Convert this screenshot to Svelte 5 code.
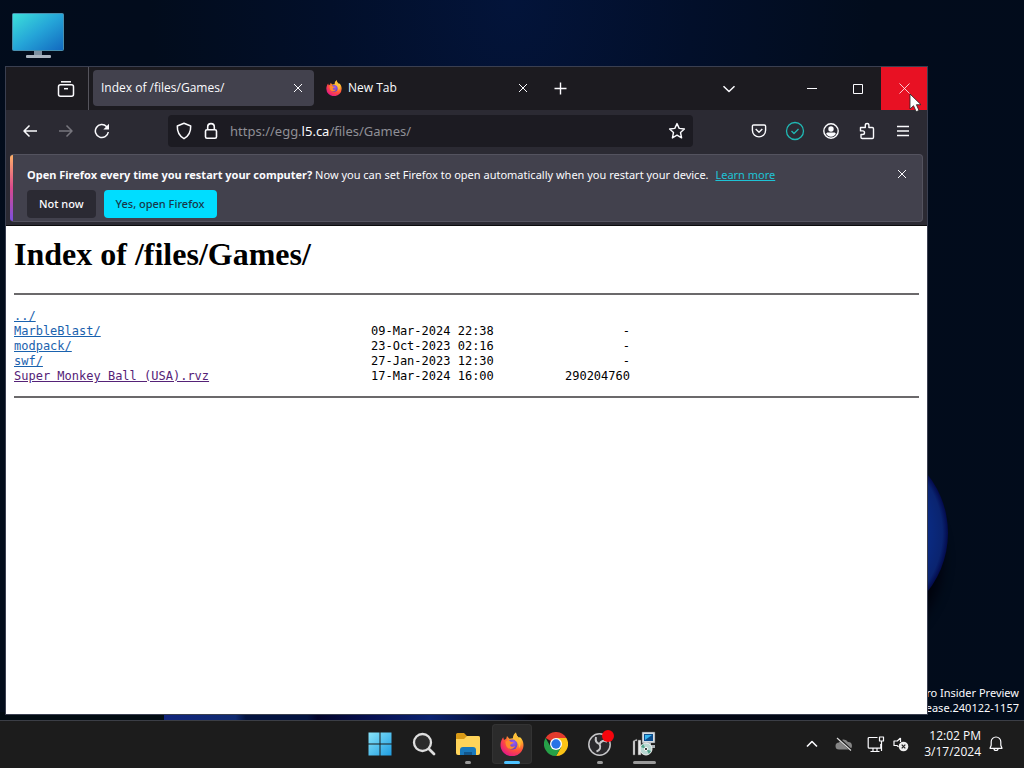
<script>
	let url = $state('/files/Games/');

	const files = [
		{ name: '../', date: '', size: '' },
		{ name: 'MarbleBlast/', date: '09-Mar-2024 22:38', size: '-' },
		{ name: 'modpack/', date: '23-Oct-2023 02:16', size: '-' },
		{ name: 'swf/', date: '27-Jan-2023 12:30', size: '-' },
		{ name: 'Super Monkey Ball (USA).rvz', date: '17-Mar-2024 16:00', size: '290204760', visited: true }
	];
</script>

{#snippet firefox(size, id)}
	<svg width={size} height={size} viewBox="0 0 24 24">
		<defs>
			<radialGradient id="{id}-body" cx="0.75" cy="0.15" r="0.95">
				<stop offset="0" stop-color="#fff04a" />
				<stop offset="0.35" stop-color="#ffa52a" />
				<stop offset="0.65" stop-color="#ff4f3c" />
				<stop offset="1" stop-color="#e3158a" />
			</radialGradient>
			<radialGradient id="{id}-core" cx="0.6" cy="0.3" r="0.8">
				<stop offset="0" stop-color="#a05cf0" />
				<stop offset="1" stop-color="#4a3cc4" />
			</radialGradient>
		</defs>
		<path
			fill="url(#{id}-body)"
			d="M3.2 5.2 4 8l2.2-1.2L7 4l2.4 2.8C11 6.400 12 6.200 13 6.300 12.800 4 14 1.500 16 .4c.2 2.600 1.200 3.600 2.600 5l1.500-.2c2.200 2 3.400 4.600 3.400 7.800A11.500 11.200 0 0 1 .5 13C.5 9.800 1.800 7.200 3.200 5.200Z"
		/>
		<circle cx="12.400" cy="12.600" r="5" fill="url(#{id}-core)" />
		<path fill="#ff8a2b" d="M5.500 9.500c2-1.200 4.200-.8 5.700.6l2.300.2c-.2 1.500-2.800 1.400-3.300 2.900.4 1.600 3 2.200 5 .8-1.500 3.800-7 4-8.800.2-.7-1.500-1-3-.9-4.700Z" />
		<path fill="#ffbd38" d="M16 .4c.2 3.600 3.500 5 4.300 9 .5 2.700 0 5-1.300 6.800.2-4-1.300-6.800-4.200-8.200-1.300-2.500-.8-6 1.200-7.600Z" />
	</svg>
{/snippet}

{#snippet cross(size)}
	<svg class="line" width={size} height={size} viewBox="0 0 10 10"><path d="m1 1 8 8M9 1 1 9" /></svg>
{/snippet}

<div class="screen">
	<main class="desktop">
		<div class="bloom"></div>
		<div class="petals"></div>

		<button class="shortcut" aria-label="This PC">
			<svg width="52" height="46" viewBox="0 0 52 46">
				<defs>
					<linearGradient id="pc" x1="0" y1="0" x2="1" y2="1">
						<stop offset="0" stop-color="#3de0da" />
						<stop offset="0.5" stop-color="#25a5d8" />
						<stop offset="1" stop-color="#1268bf" />
					</linearGradient>
				</defs>
				<path fill="#7d8fa0" d="M22 37h8v6h-8z" />
				<rect x="14" y="42" width="25" height="3" rx="1" fill="#aab4c0" />
				<rect x="0.500" y="0.500" width="51" height="37" rx="1" fill="url(#pc)" stroke="#4a8fae" />
			</svg>
		</button>

		<div class="watermark">ro Insider Preview<br />ease.240122-1157</div>

		<section class="window">
			<header class="tabs">
				<div class="view">
					<button aria-label="Firefox View">
						<svg class="line" width="18" height="18" viewBox="0 0 18 18" stroke-width="1.500">
							<path d="M4 1.800h10" />
							<rect x="1.500" y="4.800" width="15" height="11.500" rx="2" />
							<path d="M7 8.700h4" />
						</svg>
					</button>
				</div>
				<div class="tab active">
					<span>Index of /files/Games/</span>
					<button aria-label="Close tab">{@render cross(10)}</button>
				</div>
				<div class="tab">
					{@render firefox(16, 'ff-tab')}
					<span>New Tab</span>
					<button aria-label="Close tab">{@render cross(10)}</button>
				</div>
				<button class="add" aria-label="New tab">
					<svg class="line" width="13" height="13" viewBox="0 0 13 13" stroke-width="1.400"><path d="M6.500.5v12M.5 6.500h12" /></svg>
				</button>
				<button class="all" aria-label="List all tabs">
					<svg class="line" width="14" height="8" viewBox="0 0 14 8" stroke-width="1.500"><path d="m1.500 1.200 5.500 5.300 5.500-5.300" /></svg>
				</button>
				<div class="controls">
					<button aria-label="Minimize">
						<svg class="line" width="10" height="10" viewBox="0 0 10 10"><path d="M0 4.500h10" /></svg>
					</button>
					<button aria-label="Maximize">
						<svg class="line" width="10" height="10" viewBox="0 0 10 10"><path d="M.5.5h9v9h-9z" /></svg>
					</button>
					<button class="close" aria-label="Close">
						<svg class="line" width="11" height="11" viewBox="0 0 11 11" stroke-width="0.800"><path d="m.5.5 10 10M10.500.5l-10 10" /></svg>
						<svg class="cursor" width="13" height="20" viewBox="0 0 13 20">
							<path fill="#fff" stroke="#222" stroke-width="0.800" d="M1 1v15l3.500-3.300 2.700 6 2.800-1.200-2.600-5.800H12Z" />
						</svg>
					</button>
				</div>
			</header>

			<nav class="toolbar">
				<button aria-label="Back">
					<svg class="line" width="16" height="16" viewBox="0 0 16 16" stroke-width="1.500"><path d="M15 8H2M7.500 2.500 2 8l5.500 5.500" /></svg>
				</button>
				<button class="dim" aria-label="Forward">
					<svg class="line" width="16" height="16" viewBox="0 0 16 16" stroke-width="1.500"><path d="M1 8h13M8.500 2.500 14 8l-5.500 5.500" /></svg>
				</button>
				<button aria-label="Reload">
					<svg class="line" width="16" height="16" viewBox="0 0 16 16" stroke-width="1.500">
						<path d="M14.300 9A6.500 6.500 0 1 1 12.500 3.500l1.200 1.200" />
						<path fill="currentColor" stroke="none" d="M15 .8V6.500H9.300Z" />
					</svg>
				</button>

				<div class="urlbar">
					<svg class="line" width="16" height="18" viewBox="0 0 16 18" stroke-width="1.500"><path d="M8 1.200 14.700 4c.2 5.500-1.700 9.800-6.700 12.700C3 13.800 1.100 9.500 1.300 4Z" /></svg>
					<svg class="line" width="14" height="18" viewBox="0 0 14 18" stroke-width="1.600">
						<rect x="1.500" y="7.800" width="11" height="8.400" rx="1.500" />
						<path d="M3.700 7.800V4.900a3.300 3.300 0 0 1 6.600 0v2.900" />
					</svg>
					<label class="address">
						<span>https://egg.<b>l5.ca</b></span><input aria-label="Address" bind:value={url} />
					</label>
					<button aria-label="Bookmark this page">
						<svg class="line" width="18" height="18" viewBox="0 0 18 18" stroke-width="1.400"><path d="m9 1.600 2.200 4.800 5.200.6-3.900 3.500 1.100 5.400L9 13.200l-4.600 2.700 1.100-5.400L1.600 7l5.200-.6Z" /></svg>
					</button>
				</div>

				<button aria-label="Save to Pocket">
					<svg class="line" width="16" height="16" viewBox="0 0 16 16" stroke-width="1.400">
						<path d="M2.700 2h10.600c.8 0 1.300.5 1.300 1.300v4a6.600 6.600 0 0 1-13.200 0v-4C1.400 2.500 1.900 2 2.700 2Z" />
						<path d="m4.700 6 3.300 3.200L11.300 6" />
					</svg>
				</button>
				<button class="teal" aria-label="Extension">
					<svg class="line" width="20" height="20" viewBox="0 0 20 20" stroke-width="1.300">
						<circle cx="10" cy="10" r="8.500" />
						<path d="m6.500 10 2.500 2.500 4.500-4.500" />
					</svg>
				</button>
				<button aria-label="Account">
					<svg class="line" width="16" height="16" viewBox="0 0 16 16" stroke-width="1.400">
						<circle cx="8" cy="8" r="7.200" />
						<circle cx="8" cy="6" r="2.700" fill="currentColor" stroke="none" />
						<path fill="currentColor" stroke="none" d="M3.200 11c0-1 .8-1.500 1.700-1.500h6.200c.9 0 1.700.5 1.700 1.500a5.700 5.700 0 0 1-9.600 0Z" />
					</svg>
				</button>
				<button aria-label="Extensions">
					<svg class="line" width="16" height="18" viewBox="0 0 16 18" stroke-width="1.400"><path d="M1.500 5.500h4.800V3.300a1.800 1.800 0 0 1 3.600 0v2.200h3.400c.7 0 1.200.5 1.200 1.200v8.600c0 .7-.5 1.200-1.200 1.200H3.200c-.7 0-1.200-.5-1.200-1.200v-2.800h1.700a1.800 1.800 0 0 0 0-3.600H1.500Z" /></svg>
				</button>
				<button aria-label="Menu">
					<svg class="line" width="14" height="12" viewBox="0 0 14 12" stroke-width="1.300"><path d="M1 1.500h12M1 6h12M1 10.500h12" /></svg>
				</button>
			</nav>

			<div class="notice-wrap">
				<aside class="notice">
					<div class="message">
						<p><strong>Open Firefox every time you restart your computer?</strong> Now you can set Firefox to open automatically when you restart your device. <a href="#learn">Learn more</a></p>
						<button class="dismiss" aria-label="Dismiss">{@render cross(10)}</button>
					</div>
					<div class="answers">
						<button>Not now</button>
						<button class="primary">Yes, open Firefox</button>
					</div>
				</aside>
			</div>

			<article class="page">
				<h1>Index of /files/Games/</h1>
				<hr />
				<table>
					<tbody>
						{#each files as file}
							<tr>
								<td class="name"><a href="#file" class:visited={file.visited}>{file.name}</a></td>
								<td class="date">{file.date}</td>
								<td class="size">{file.size}</td>
							</tr>
						{/each}
					</tbody>
				</table>
				<hr />
			</article>
		</section>
	</main>

	<footer class="taskbar">
		<div class="apps">
			<button aria-label="Start">
				<svg width="24" height="24" viewBox="0 0 24 24">
					<defs>
						<linearGradient id="win" x1="0" y1="0" x2="24" y2="24" gradientUnits="userSpaceOnUse">
							<stop offset="0" stop-color="#8be6fb" />
							<stop offset="1" stop-color="#1c9be0" />
						</linearGradient>
					</defs>
					<path fill="url(#win)" d="M.5.500h11v11H.5zM12.500.500h11v11h-11zM.5 12.500h11v11H.5zM12.500 12.500h11v11h-11z" />
				</svg>
			</button>
			<button aria-label="Search">
				<svg width="24" height="24" viewBox="0 0 24 24" fill="#2c2c2c" stroke="#dedede" stroke-width="2.300" stroke-linecap="round">
					<circle cx="10.500" cy="10.500" r="8.500" />
					<path d="m17 17 5 5" stroke-width="2.800" />
				</svg>
			</button>
			<button class="running" aria-label="File Explorer">
				<svg width="26" height="24" viewBox="0 0 26 24">
					<path fill="#d99a16" d="M1 2.500Q1 1 2.500 1H9l3 3h11q2 0 2 2v4H1Z" />
					<path fill="#ffd45a" d="M1 7h8l3-3h11q2 0 2 2v15q0 2-2 2H3q-2 0-2-2Z" />
					<path fill="#1979bd" d="M5 23v-5q0-3 3-3h10q3 0 3 3v5Z" />
					<path fill="#12568c" d="M9 23v-3h8v3Z" />
				</svg>
			</button>
			<button class="running current" aria-label="Firefox">{@render firefox(24, 'ff-bar')}</button>
			<button aria-label="Chrome">
				<svg width="24" height="24" viewBox="0 0 24 24">
					<path fill="#e33b2e" d="M12 12 1.600 6A12 12 0 0 1 22.400 6Z" />
					<path fill="#fbc316" d="M12 6h10.400A12 12 0 0 1 12 24l5.200-9Z" />
					<path fill="#26a148" d="M1.600 6 6.800 15 12 18l5.200-3L12 24A12 12 0 0 1 1.600 6Z" />
					<circle cx="12" cy="12" r="6" fill="#fff" />
					<circle cx="12" cy="12" r="4.700" fill="#2873e6" />
				</svg>
			</button>
			<button class="running" aria-label="OBS Studio">
				<svg width="28" height="28" viewBox="0 0 28 28">
					<circle cx="13.500" cy="14.500" r="10.700" fill="#2a292c" stroke="#c6c6c8" stroke-width="1.500" />
					<g fill="none" stroke="#c6c6c8" stroke-width="2">
						<path d="M10 7c-1 4 .5 6.200 3.500 7" />
						<path d="M21 12c-3-2.500-6-1-7.500 2" />
						<path d="M10.500 21.500c3.500-1.200 4.700-4 3-7.500" />
					</g>
					<circle cx="22" cy="6" r="6" fill="#f5050d" />
				</svg>
			</button>
			<button class="running wide" aria-label="Installer">
				<svg width="24" height="26" viewBox="0 0 24 26">
					<path fill="#d5dce2" stroke="#555" stroke-width="0.500" d="M10 1h13v11H10z" />
					<path fill="#0c4c8c" d="M12 3h9v7h-9z" />
					<path fill="#35b3ee" d="M13 4h7l-7 5z" />
					<path fill="#aeb4b8" d="M14 12h5v2h-5zM10 14h13v3H10z" />
					<path fill="#e8e8e8" stroke="#555" stroke-width="0.500" d="m1 10 4-2v2H3v14H1zM6 9h3v15H6z" />
					<circle cx="14" cy="18" r="6" fill="#b9d7d2" stroke="#f2f2f2" />
					<path fill="#52a28a" d="m14 18-5-2 2-3zM14 18l5 2-2 3z" />
					<circle cx="14" cy="18" r="1.600" fill="#222" stroke="#fff" />
				</svg>
			</button>
		</div>

		<div class="tray">
			<button aria-label="Hidden icons">
				<svg class="line" width="12" height="8" viewBox="0 0 12 8" stroke-width="1.600"><path d="m1 6.500 5-5 5 5" /></svg>
			</button>
			<button aria-label="OneDrive">
				<svg width="18" height="14" viewBox="0 0 18 14">
					<path fill="#858585" d="M4 12.500a3.500 3.500 0 0 1 0-7 5 5 0 0 1 9-.5 3.800 3.800 0 0 1 1 7.500Z" />
					<path stroke="#1c1c1c" stroke-width="2.600" d="m3 1 13 12" />
					<path stroke="#dcdcdc" stroke-width="1.200" d="m2 1 14 12.500" />
				</svg>
			</button>
			<button class="status" aria-label="Network and volume">
				<svg class="line" width="18" height="17" viewBox="0 0 18 17" stroke-width="1.200">
					<path d="M10.500 1.500H2.200q-1 0-1 1v8.700q0 1 1 1h11.600V8M6 12.200v3M10 12.200v3M3.500 15.500h9" />
					<path d="M12.500 1h4v4h-4zM14.500 5v10" />
				</svg>
				<svg class="line" width="16" height="16" viewBox="0 0 16 16" stroke-width="1.200">
					<path d="M7.500 2 4.300 5H1v4.500h3l1.500 1.400M7.500 2v4" />
					<circle cx="10.500" cy="10.500" r="4.800" fill="#eee" stroke="none" />
					<path stroke="#222" d="m8.700 8.700 3.600 3.600M12.300 8.700l-3.600 3.600" />
				</svg>
			</button>
			<button class="clock">12:02 PM<br />3/17/2024</button>
			<button aria-label="Notifications">
				<svg class="line" width="14" height="16" viewBox="0 0 14 16" stroke-width="1.200">
					<path d="M7 1a4.800 4.800 0 0 0-4.800 4.800v3.400L1 12.300h12l-1.200-3.100V5.800A4.800 4.800 0 0 0 7 1ZM5 12.500a2 2 0 0 0 4 0" />
				</svg>
			</button>
		</div>
	</footer>
</div>

<style>
	:global(body) {
		margin: 0;
	}

	.screen {
		height: 100vh;
		display: flex;
		flex-direction: column;
		overflow: hidden;
		font: 12px/16px "Open Sans", "Noto Sans", sans-serif;
		color: #fbfbfe;
	}

	button {
		display: flex;
		align-items: center;
		justify-content: center;
		padding: 0;
		border: 0;
		background: none;
		color: inherit;
		font: inherit;
	}

	svg {
		flex: none;
	}

	.line {
		fill: none;
		stroke: currentColor;
		stroke-linejoin: round;
	}

	.desktop {
		position: relative;
		flex: 1;
		min-height: 0;
		overflow: hidden;
		background: radial-gradient(ellipse at 50% 0, #03143a 0, #020f2a 25%, #020c1c 50%, #020c1b 100%);
	}

	.bloom {
		position: absolute;
		right: 76px;
		bottom: 93px;
		width: 188px;
		height: 188px;
		border-radius: 50%;
		background: radial-gradient(circle closest-side, #0a2a80 80%, #0a2470 94%, #030a4c 100%);
		box-shadow: -6px 26px 12px #01020c;
	}

	.petals {
		position: absolute;
		left: 0;
		right: 0;
		bottom: 0;
		height: 8px;
		background: linear-gradient(90deg, #010b12 0 16%, #10247c 16%, #0f2a70 23%, #031340 24% 30%, #02042a 31%, #060f50 36%, #0a2270 42%, #02030f 52%, #020613 70%, #020c1b 90%);
	}

	.shortcut {
		position: absolute;
		left: 12px;
		top: 13px;
	}

	.watermark {
		position: absolute;
		right: 5px;
		bottom: 5px;
		font-family: "Noto Sans", sans-serif;
		font-size: 11px;
		line-height: 15px;
		text-align: right;
		white-space: nowrap;
	}

	.window {
		position: absolute;
		top: 66px;
		right: 96px;
		bottom: 5px;
		left: 5px;
		display: flex;
		flex-direction: column;
		border: 1px solid #3a3f50;
		background: #2b2a33;
	}

	.tabs {
		display: flex;
		height: 43px;
		background: #1c1b20;
	}

	.view {
		display: flex;
		justify-content: flex-end;
		box-sizing: border-box;
		width: 83px;
		padding-right: 13px;
		margin-right: 4px;
		border-right: 1px solid #55545c;
	}

	.tab {
		display: flex;
		align-items: center;
		box-sizing: border-box;
		width: 221px;
		height: 36px;
		margin: 3px 4px 0 0;
		padding: 0 6px 0 8px;
		gap: 6px;
		border-radius: 4px;
	}

	.tab.active {
		background: #42414d;
	}

	.tab span {
		flex: 1;
	}

	.tab button {
		width: 20px;
		height: 20px;
	}

	.add {
		width: 34px;
	}

	.all {
		width: 36px;
		margin-left: auto;
	}

	.controls {
		display: flex;
		margin-left: 42px;
	}

	.controls button {
		width: 46px;
	}

	.controls .close {
		position: relative;
		background: #e81123;
	}

	.cursor {
		position: absolute;
		left: 28px;
		top: 26px;
	}

	.toolbar {
		display: flex;
		align-items: center;
		height: 41px;
		padding: 0 8px;
		gap: 4px;
	}

	.toolbar button {
		width: 32px;
		height: 32px;
	}

	.toolbar .dim {
		color: #77767e;
	}

	.toolbar .teal {
		color: #20b8b4;
	}

	.urlbar {
		flex: 1;
		display: flex;
		align-items: center;
		min-width: 0;
		height: 32px;
		margin: 0 46px;
		padding-left: 8px;
		gap: 12px;
		border-radius: 4px;
		background: #1c1b22;
	}

	.address {
		flex: 1;
		display: flex;
		min-width: 0;
		color: #8f8f96;
		font-family: "Noto Sans", sans-serif;
		font-size: 13px;
		line-height: 20px;
	}

	.address b {
		color: #fbfbfe;
		font-weight: 400;
	}

	.address input {
		flex: 1;
		min-width: 0;
		padding: 0;
		border: 0;
		outline: 0;
		background: none;
		color: inherit;
		font: inherit;
	}

	.notice-wrap {
		padding: 3px 4px;
		border-bottom: 1px solid #0c0c0d;
	}

	.notice {
		position: relative;
		padding: 9px 10px 3px 17px;
		border: 1px solid #54535f;
		border-left: 0;
		border-radius: 4px;
		background: #42414d;
		font-family: "Noto Sans", sans-serif;
		font-size: 11px;
	}

	.notice::before {
		content: "";
		position: absolute;
		left: 0;
		top: 0;
		bottom: 0;
		width: 3px;
		border-radius: 4px 0 0 4px;
		background: linear-gradient(#ffb067, #d9498d 50%, #7a4fe0);
	}

	.message {
		display: flex;
		justify-content: space-between;
		height: 22px;
	}

	.message p {
		margin: 3px 0 0;
	}

	.message a {
		margin-left: 4px;
		color: #1fc3d6;
	}

	.dismiss {
		width: 20px;
		height: 20px;
	}

	.answers {
		display: flex;
		gap: 8px;
		margin-top: 4px;
	}

	.answers button {
		height: 28px;
		padding: 0 12px;
		border-radius: 4px;
		background: #2b2a33;
		font-weight: 500;
	}

	.answers .primary {
		background: #00ddff;
		color: #17384a;
	}

	.page {
		flex: 1;
		padding: 0 8px;
		overflow: hidden;
		background: #fff;
		color: #000;
	}

	h1 {
		margin: 10px 0 21px;
		font: bold 32px/36px "Liberation Serif", serif;
	}

	hr {
		margin: 0;
		border: 0;
		border-top: 2px solid #6b696b;
	}

	table {
		margin: 14px 0 12px;
		border-collapse: collapse;
		font: 12px/15px "DejaVu Sans Mono", monospace;
	}

	td {
		height: 15px;
		padding: 0;
		white-space: nowrap;
	}

	.name {
		width: 357px;
	}

	.date {
		width: 140px;
	}

	.size {
		width: 119px;
		text-align: right;
	}

	.name a {
		color: #1a62ae;
	}

	.name a.visited {
		color: #552277;
	}

	.taskbar {
		display: grid;
		grid-template-columns: 1fr auto 1fr;
		box-sizing: border-box;
		height: 48px;
		padding-bottom: 1px;
		border-top: 1px solid #3b3e46;
		background: #1c1c1c;
	}

	.apps {
		grid-column: 2;
		display: flex;
		align-items: center;
		gap: 4px;
	}

	.apps button {
		position: relative;
		width: 40px;
		height: 40px;
		border-radius: 4px;
	}

	.apps .current {
		background: #2b2b2b;
		box-shadow: inset 0 0 0 1px #333;
	}

	.running::after {
		content: "";
		position: absolute;
		bottom: 0;
		width: 6px;
		height: 3px;
		border-radius: 2px;
		background: #9a9a9a;
	}

	.current::after {
		width: 16px;
		background: #4cc2ff;
	}

	.wide::after {
		width: 23px;
	}

	.tray {
		display: flex;
		align-items: center;
		justify-content: flex-end;
		padding-right: 21px;
	}

	.tray button {
		width: 32px;
		height: 40px;
	}

	.tray .status {
		width: 48px;
		margin-left: 4px;
		gap: 8px;
	}

	.tray .clock {
		width: auto;
		padding: 0 8px 0 12px;
		text-align: right;
	}

	.tray button:last-child {
		width: 14px;
	}
</style>
